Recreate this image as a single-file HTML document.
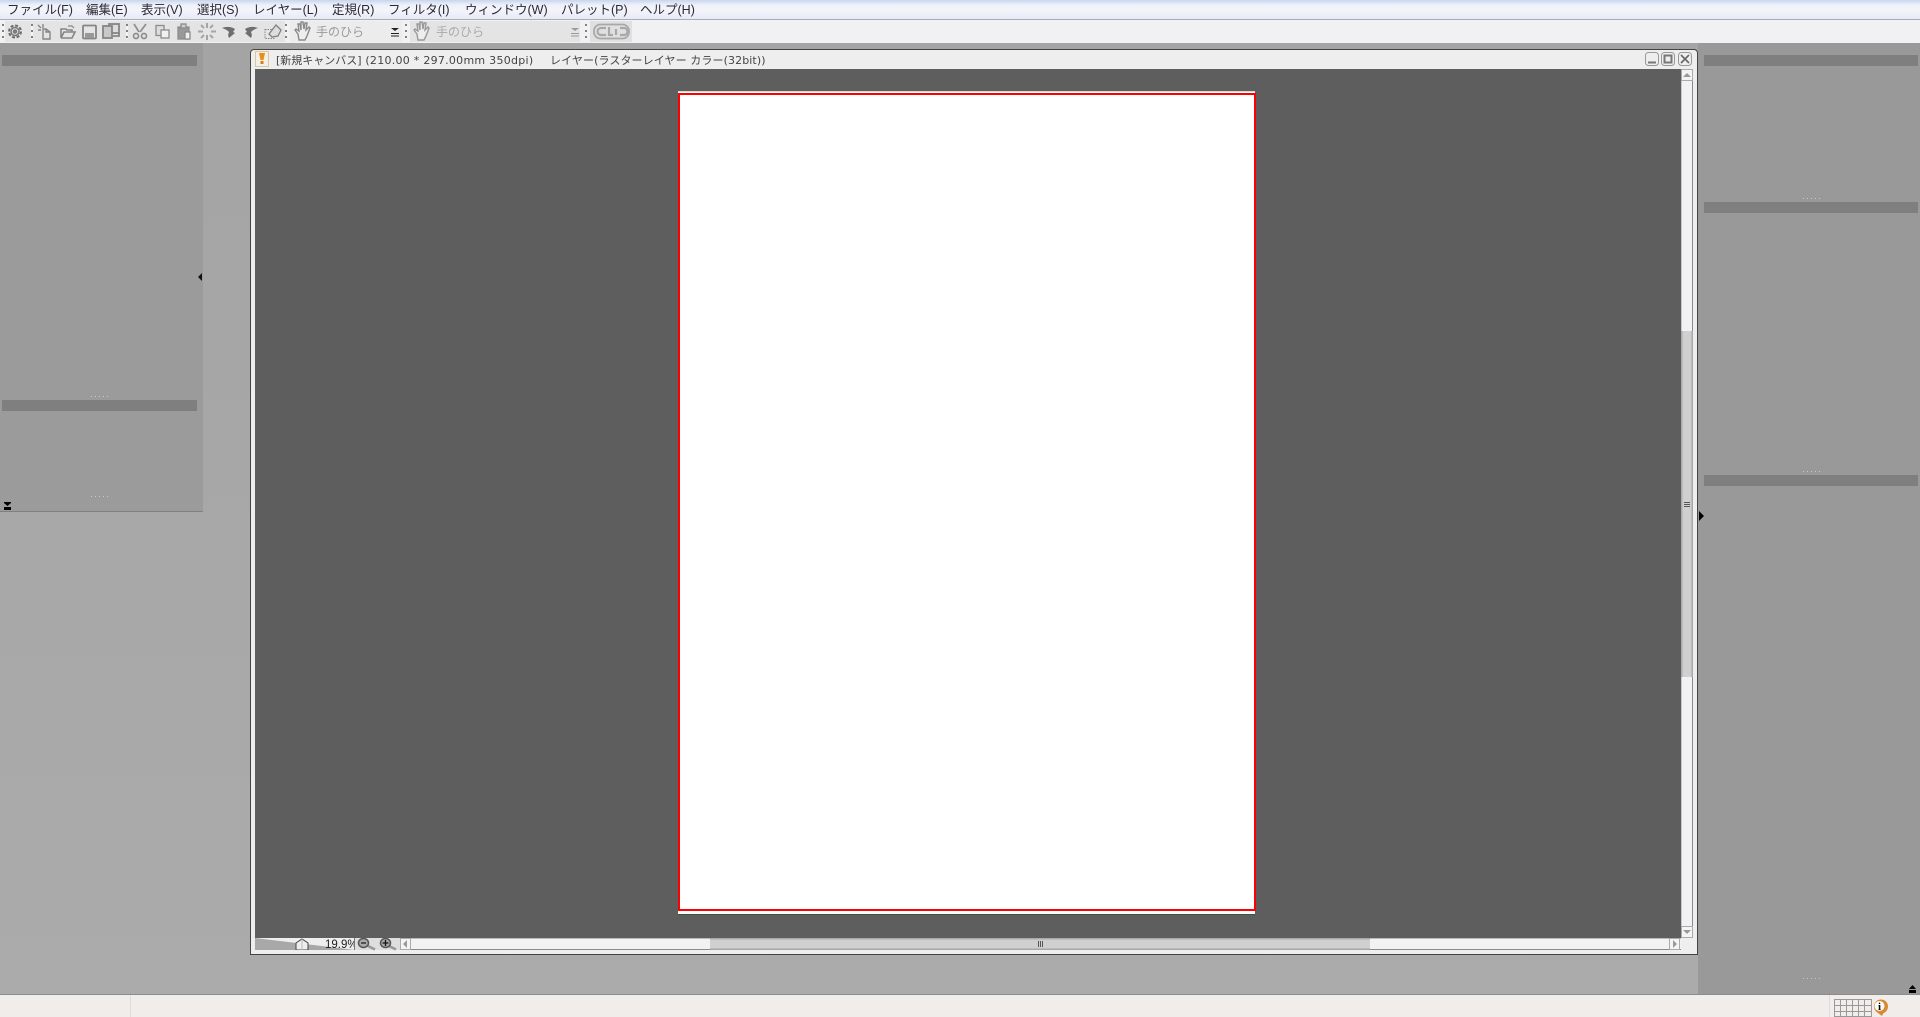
<!DOCTYPE html>
<html lang="ja"><head><meta charset="utf-8"><title>Canvas</title>
<style>
html,body{margin:0;padding:0;width:1920px;height:1017px;overflow:hidden;background:#aaa}
body{position:relative;font-family:"Liberation Sans","Noto Sans CJK JP",sans-serif}
.a,.m,.bar,.dots,svg,.b,.t{position:absolute}
.m{top:2px;font-size:12.5px;line-height:17px;color:#2a2a35;white-space:nowrap}
.bar{background:#7f7f7f;height:11px}
.dots{width:18px;height:1px;background:repeating-linear-gradient(90deg,#c8c8c8 0 1px,transparent 1px 4px)}
.g{position:absolute;top:24px;width:2px;height:15px;background:repeating-linear-gradient(180deg,#808080 0 2px,#f4f4f4 2px 6px)}
.t{white-space:nowrap}
.ti{top:52px;font-family:"DejaVu Sans","Noto Sans CJK JP",sans-serif;font-size:11px;line-height:17px;color:#444}
</style></head><body>
<div class="a" style="left:0;top:0;width:1920px;height:19px;background:linear-gradient(#c9d5ee 0,#eef1f9 5px,#f4f5fb 10px,#e8eaf4 19px);border-bottom:1px solid #a9adc4"></div>
<span class="m" style="left:7px">ファイル(F)</span><span class="m" style="left:86px">編集(E)</span><span class="m" style="left:141px">表示(V)</span><span class="m" style="left:197px">選択(S)</span><span class="m" style="left:253px">レイヤー(L)</span><span class="m" style="left:332px">定規(R)</span><span class="m" style="left:388px">フィルタ(I)</span><span class="m" style="left:465px">ウィンドウ(W)</span><span class="m" style="left:561px">パレット(P)</span><span class="m" style="left:640px">ヘルプ(H)</span>

<div class="a" style="left:0;top:20px;width:1920px;height:23px;background:#f1f1f4"></div>
<div class="a" style="left:5px;top:21px;width:280px;height:21px;background:#e4e4e4"></div>
<div class="a" style="left:290px;top:21px;width:112px;height:21px;background:#ececec"></div>
<div class="a" style="left:410px;top:21px;width:170px;height:21px;background:#e4e4e4"></div>
<div class="a" style="left:590px;top:21px;width:42px;height:21px;background:#e0e0e0"></div>
<i class="g" style="left:2px"></i><i class="g" style="left:31px"></i><i class="g" style="left:126px"></i><i class="g" style="left:285px"></i><i class="g" style="left:405px"></i><i class="g" style="left:585px"></i>

<!-- toolbar icons -->
<svg style="left:0;top:20px" width="640" height="23" viewBox="0 0 640 23" fill="none">
 <g stroke="#777" stroke-width="1.5">
  <circle cx="15" cy="11.5" r="4"/><circle cx="15" cy="11.5" r="1.500" fill="#888"/><circle cx="15" cy="11.5" r="6" stroke-dasharray="3 1.700" stroke="#6a6a6a" stroke-width="2"/>
 </g>
 <g stroke="#858585" stroke-width="1.4">
  <path d="M38 5l3 3M43 4v4M38 10h3M43 9h3l4 3v7h-7zM46 9v3h4"/>
  <path d="M61 18V9h5l1 1h5v2M61 18h11l3-6H64l-3 6" stroke-width="1.600"/><path d="M68 6h4l2 2" stroke-width="1.200"/>
  <rect x="83" y="5.500" width="13" height="13" rx="1" stroke-width="1.800"/><rect x="85" y="13" width="9" height="5" fill="#999" stroke="none"/>
  <rect x="109" y="4" width="10" height="9" fill="#ddd" stroke-width="1.800"/><rect x="103" y="6" width="9" height="12" fill="#c8c8c8" stroke-width="1.800"/><path d="M113 16h6v-3" stroke-width="1.800"/>
 </g>
 <g stroke="#8e8e8e" stroke-width="1.700">
  <path d="M134 4l5 8M146 4l-6 8"/><circle cx="136" cy="16" r="2.500"/><circle cx="144" cy="16" r="2.500"/>
 </g>
 <g stroke="#8c8c8c" stroke-width="1.300">
  <rect x="156" y="5.500" width="8" height="10" fill="#ddd"/><rect x="161" y="10" width="8" height="8" fill="#f0f0f0"/>
  <rect x="178" y="7" width="11" height="12" fill="#999"/><rect x="181" y="4" width="5" height="4" fill="#ccc"/><rect x="185" y="12" width="5" height="7" fill="#f0f0f0"/>
 </g>
 <g stroke="#a5a5a5" stroke-width="2">
  <path d="M207 3v5M207 15v5M198 11.500h5M211 11.500h5M201 5l3 3M210 15l3 3M213 5l-3 3M204 15l-3 3"/>
 </g>
 <path d="M222 8c5-2 10-1 13 1l-2 3 2 1-6 5-1-3 1-3c-2-2-4-3-7-4z" fill="#6f6f6f"/>
 <path d="M258 8c-5-2-10-1-13 1l2 3-2 1 6 5 1-3-1-3c2-2 4-3 7-4z" fill="#6f6f6f"/>
 <rect x="265" y="9.500" width="9" height="9" stroke="#888" stroke-dasharray="1.500 1"/>
 <path d="M269 14l7-9 5 5-3 6-6 1z" fill="#ddd" stroke="#808080" stroke-width="1.300"/>
 <g stroke="#8a8a8a" stroke-width="1.400" fill="#eee">
  <path d="M298 14l-3-4 1-1 3 2-1-7h2l1 6V2h2l1 7 1-6h2l-1 7 3-3 1 1-3 8-2 4h-6z"/>
  <path d="M417 14l-3-4 1-1 3 2-1-7h2l1 6V2h2l1 7 1-6h2l-1 7 3-3 1 1-3 8-2 4h-6z" stroke="#999"/>
 </g>
 <path d="M391 8h8l-4 3zM391 13h8v1h-8zM391 15.500h8v1h-8z" fill="#222"/>
 <path d="M571 8h8l-4 3zM571 13h8v1h-8zM571 15.500h8v1h-8z" fill="#999"/>
 <g stroke="#a8a8a8" fill="none">
  <rect x="594" y="4.500" width="35" height="14" rx="6.500" stroke-width="1.800"/>
  <path d="M606 8h-5a3.500 3.500 0 0 0 0 7h5M609 7v8h4M616 9v6M620 8h6M620 15h4a3.500 3.500 0 0 0 0-7" stroke-width="2.200"/>
 </g>
</svg>
<span class="t" style="left:316px;top:24px;font-size:12px;line-height:16px;color:#999">手のひら</span>
<span class="t" style="left:436px;top:24px;font-size:12px;line-height:16px;color:#aaa">手のひら</span>

<!-- backgrounds -->
<div class="a" style="left:0;top:43px;width:1920px;height:951px;background:linear-gradient(#a4a4a4,#ababab)"></div>
<!-- left panel -->
<div class="a" style="left:0;top:43px;width:203px;height:468px;background:#9b9b9b;border-bottom:1px solid #808080"></div>
<div class="bar" style="left:2px;top:55px;width:195px"></div>
<div class="bar" style="left:2px;top:400px;width:195px"></div>
<div class="dots" style="left:91px;top:396px"></div>
<div class="dots" style="left:91px;top:496px"></div>
<svg style="left:197px;top:272px" width="5" height="10"><path d="M5 1L1 5l4 4z" fill="#111"/></svg>
<svg style="left:4px;top:502px" width="8" height="8"><path d="M0 0h7v1L3.500 4 0 1zM0 5h7v3H0z" fill="#000"/></svg>
<!-- right panel -->
<div class="a" style="left:1698px;top:43px;width:222px;height:951px;background:#999"></div>
<div class="bar" style="left:1704px;top:55px;width:214px"></div>
<div class="bar" style="left:1704px;top:202px;width:214px"></div>
<div class="bar" style="left:1704px;top:475px;width:214px"></div>
<div class="dots" style="left:1803px;top:198px"></div>
<div class="dots" style="left:1803px;top:471px"></div>
<div class="dots" style="left:1803px;top:978px"></div>
<svg style="left:1699px;top:511px" width="5" height="10"><path d="M0 0l5 5-5 5z" fill="#000"/></svg>
<svg style="left:1909px;top:985px" width="8" height="8"><path d="M0 4L3.500 0 7 4zM0 5h7v3H0z" fill="#000"/></svg>

<!-- canvas window -->
<div class="a" style="left:250px;top:49px;width:1446px;height:904px;background:#eeeeee;border:1px solid #444;border-radius:4px 4px 0 0"></div>
<svg style="left:255px;top:51px" width="14" height="16"><rect x=".5" y=".5" width="13" height="15" fill="#f4efe6" stroke="#d9c7a0"/><path d="M4 2h6L8.500 9h-3z" fill="#e8901a"/><rect x="5.500" y="10" width="3" height="3" fill="#d8801a"/></svg>
<span class="t ti" style="left:276px">[新規キャンバス]<span style="letter-spacing:.27px"> (210.00 * 297.00mm 350dpi)</span></span>
<span class="t ti" style="left:550px;letter-spacing:.1px">レイヤー(ラスターレイヤー カラー(32bit))</span>
<svg style="left:1644px;top:52px" width="50" height="15" fill="none">
 <rect x="1.500" y=".5" width="13" height="13" rx="3" stroke="#999"/><path d="M4 10.500h8" stroke="#777" stroke-width="2"/>
 <rect x="17.500" y=".5" width="13" height="13" rx="3" stroke="#999"/><rect x="20.500" y="3.500" width="7" height="7" stroke="#777" stroke-width="2"/>
 <rect x="34.500" y=".5" width="13" height="13" rx="3" stroke="#999"/><path d="M37 3l8 8M45 3l-8 8" stroke="#666" stroke-width="1.600"/>
</svg>
<!-- workspace -->
<div class="a" style="left:255px;top:69px;width:1426px;height:869px;background:#5e5e5e"></div>
<!-- paper -->
<div class="a" style="left:678px;top:91px;width:577px;height:822px;background:#fff;border-bottom:1px solid #2f5a35;border-top:1px solid #cfe0cf"></div>
<div class="a" style="left:678px;top:93px;width:574px;height:814px;border:2px solid #f00;box-sizing:content-box"></div>
<!-- vertical scrollbar -->
<div class="a" style="left:1681px;top:69px;width:12px;height:869px;background:#f2f2f5;border-left:1px solid #c8c8c8;box-sizing:border-box;border-right:1px solid #8a8a8a"></div>
<div class="a" style="left:1681px;top:69px;width:12px;height:12px;background:#f4f4f4;border:1px solid #aaa;box-sizing:border-box"></div>
<svg style="left:1683px;top:72px" width="8" height="6"><path d="M0 5l4-4 4 4z" fill="#999"/></svg>
<div class="a" style="left:1681px;top:926px;width:12px;height:12px;background:#f4f4f4;border:1px solid #aaa;box-sizing:border-box"></div>
<svg style="left:1683px;top:929px" width="8" height="6"><path d="M0 1l4 4 4-4z" fill="#999"/></svg>
<div class="a" style="left:1681px;top:331px;width:12px;height:346px;background:linear-gradient(90deg,#a0a0a0,#d0d0d0 20%,#d0d0d0 80%,#9c9c9c)"></div>
<div class="a" style="left:1684px;top:502px;width:6px;height:6px;background:repeating-linear-gradient(180deg,#555 0 1px,transparent 1px 2px)"></div>
<!-- bottom strip -->
<svg style="left:255px;top:938px" width="100" height="12"><rect width="100" height="12" fill="#eee"/><path d="M0 0L100 12H0z" fill="#a8a8a8"/><path d="M41 12V5l6-4 6 4v7z" fill="#eee" stroke="#444"/><path d="M47 1v11" stroke="#bbb"/></svg>
<span class="t" style="left:325px;top:938px;font-size:11.500px;line-height:14px;color:#222">19.9%</span>
<div class="a" style="left:354px;top:938px;width:46px;height:12px;background:#dedede;border-left:1px solid #777"></div>
<svg style="left:357px;top:938px" width="44" height="13" fill="none"><path d="M11 8l7 3.500" stroke="#999" stroke-width="2.500"/><ellipse cx="6.500" cy="5" rx="5" ry="4.500" fill="#aaa" stroke="#555" stroke-width="1.500"/><path d="M4 5h5" stroke="#222" stroke-width="1.300"/><path d="M32 8l7 3.500" stroke="#999" stroke-width="2.500"/><ellipse cx="28.500" cy="5" rx="5" ry="4.500" fill="#aaa" stroke="#555" stroke-width="1.500"/><path d="M25.500 5h6M28.500 2v6" stroke="#111" stroke-width="1.300"/></svg>
<div class="a" style="left:400px;top:938px;width:1281px;height:12px;background:#f2f2f5;border-top:1px solid #bbb;border-bottom:1px solid #8a8a8a;box-sizing:border-box"></div>
<div class="a" style="left:400px;top:938px;width:11px;height:12px;background:#f4f4f4;border:1px solid #aaa;box-sizing:border-box"></div>
<svg style="left:402px;top:940px" width="6" height="8"><path d="M5 0L1 4l4 4z" fill="#999"/></svg>
<div class="a" style="left:1669px;top:938px;width:11px;height:12px;background:#f4f4f4;border:1px solid #aaa;box-sizing:border-box"></div>
<svg style="left:1672px;top:940px" width="6" height="8"><path d="M1 0l4 4-4 4z" fill="#999"/></svg>
<div class="a" style="left:710px;top:938px;width:660px;height:12px;background:linear-gradient(#a0a0a0,#d0d0d0 20%,#d0d0d0 80%,#9c9c9c)"></div>
<div class="a" style="left:1038px;top:941px;width:5px;height:6px;background:repeating-linear-gradient(90deg,#555 0 1px,transparent 1px 2px)"></div>

<!-- status bar -->
<div class="a" style="left:0;top:994px;width:1920px;height:23px;background:#f0edeb;border-top:1px solid #8c8c8c;box-sizing:border-box"></div>
<div class="a" style="left:130px;top:995px;width:1px;height:22px;background:#ddd"></div>
<div class="a" style="left:1829px;top:995px;width:1px;height:22px;background:#ddd"></div>
<svg style="left:1834px;top:999px" width="40" height="18" fill="none" stroke="#999"><path d="M.5.5h37v17H.5zM.5 6.500h37M.5 12.500h37M6.500 0v18M12.500 0v18M18.500 0v18M24.500 0v18M30.500 0v18"/></svg>
<svg style="left:1873px;top:999px" width="16" height="18"><circle cx="8" cy="7.500" r="7" fill="#d98a2e"/><circle cx="6.500" cy="7" r="5" fill="#fff"/><path d="M5 14l4 3 2-4z" fill="#d98a2e"/><text x="6.500" y="11" font-size="11" font-weight="bold" font-family="Liberation Serif" text-anchor="middle" fill="#000">i</text></svg>
</body></html>
